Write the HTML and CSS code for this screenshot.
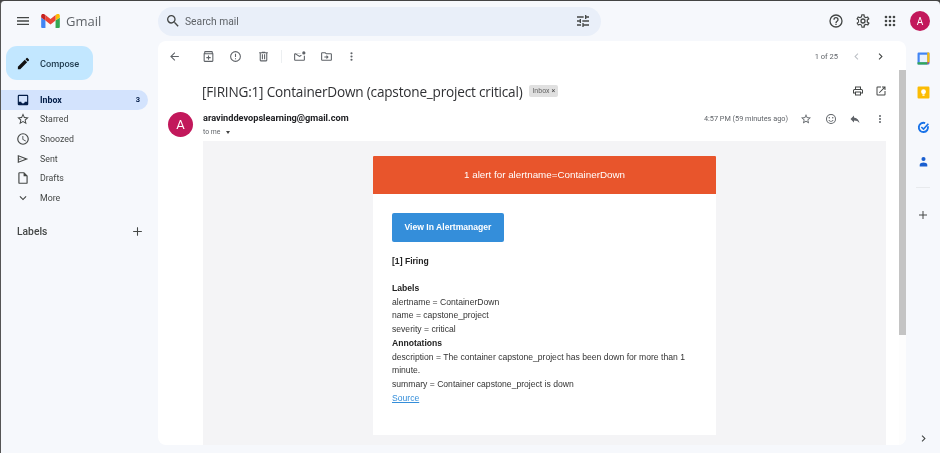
FILE: index.html
```html
<!DOCTYPE html>
<html lang="en">
<head>
<meta charset="utf-8">
<title>Gmail</title>
<link rel="stylesheet" href="styles.css">
</head>
<body>
<div class="app">
  <header class="topbar">
    <div class="brand">
      <svg class="ic menu" viewBox="0 0 24 24"><path d="M3 18h18v-2H3zm0-5h18v-2H3zm0-7v2h18V6z"/></svg>
      <svg class="logo" viewBox="0 0 24 18"><path fill="#4285f4" d="M1.6 18H5.500V8.500L0 4.400V16.400C0 17.300.7 18 1.600 18z"/><path fill="#34a853" d="M18.500 18h3.900c.9 0 1.600-.7 1.600-1.600V4.400l-5.500 4.100z"/><path fill="#fbbc04" d="M18.500 1.400v7.100L24 4.400V2.200C24 .2 21.700-1 20.100.2z"/><path fill="#ea4335" d="M5.500 8.500V1.400L12 6.300l6.500-4.900v7.100L12 13.400z"/><path fill="#c5221f" d="M0 2.200v2.200l5.500 4.100V1.400L3.900.2C2.300-1 0 .2 0 2.200z"/></svg>
      <span class="wordmark">Gmail</span>
    </div>
    <div class="search">
      <svg class="ic search-ic" viewBox="0 0 24 24"><path d="M15.500 14h-.79l-.28-.27A6.471 6.471 0 0 0 16 9.500 6.500 6.500 0 1 0 9.500 16c1.610 0 3.090-.59 4.230-1.570l.27.28v.79l5 4.990L20.490 19l-4.990-5zm-6 0C7.010 14 5 11.990 5 9.500S7.010 5 9.500 5 14 7.010 14 9.500 11.990 14 9.500 14z"/></svg>
      <span class="search-text">Search mail</span>
      <svg class="ic tune" viewBox="0 0 24 24"><path d="M3 17v2h6v-2zM3 5v2h10V5zm10 16v-2h8v-2h-8v-2h-2v6zM7 9v2H3v2h4v2h2V9zm14 4v-2H11v2zm-6-4h2V7h4V5h-4V3h-2z"/></svg>
    </div>
    <div class="top-actions">
      <svg class="ic" viewBox="0 0 24 24"><path d="M11 18h2v-2h-2zm1-16a10 10 0 1 0 0 20 10 10 0 0 0 0-20zm0 18a8 8 0 1 1 0-16 8 8 0 0 1 0 16zm0-14a4 4 0 0 0-4 4h2a2 2 0 1 1 4 0c0 2-3 1.750-3 5h2c0-2.250 3-2.500 3-5a4 4 0 0 0-4-4z"/></svg>
      <svg class="ic" viewBox="0 0 24 24"><path d="M19.400 13a7.500 7.500 0 0 0 0-2l2.100-1.600a.5.5 0 0 0 .1-.6l-2-3.500a.5.5 0 0 0-.6-.2l-2.500 1a7.300 7.300 0 0 0-1.700-1l-.4-2.700a.5.5 0 0 0-.5-.4h-4a.5.5 0 0 0-.5.4l-.4 2.700a7.700 7.700 0 0 0-1.700 1l-2.500-1a.5.5 0 0 0-.6.2l-2 3.500a.5.5 0 0 0 .1.6L4.600 11a7.500 7.500 0 0 0 0 2l-2.100 1.600a.5.5 0 0 0-.1.6l2 3.500c.1.2.4.3.6.2l2.500-1c.5.4 1.100.7 1.700 1l.4 2.700c0 .2.3.4.5.4h4c.2 0 .5-.2.5-.4l.4-2.700c.6-.3 1.200-.6 1.700-1l2.500 1c.2.1.5 0 .6-.2l2-3.500a.5.5 0 0 0-.1-.6zM17.500 11.200a5.400 5.400 0 0 1 0 1.600l-.1.9 1.900 1.500-1 1.700-2.200-.9-.8.6a5.600 5.600 0 0 1-1.300.8l-.9.4-.3 2.300h-2l-.3-2.300-.9-.4a5.500 5.500 0 0 1-1.300-.8l-.8-.6-2.200.9-1-1.700 1.900-1.500-.1-.9a5.400 5.400 0 0 1 0-1.600l.1-.9-1.900-1.500 1-1.700 2.200.9.8-.6a5.600 5.600 0 0 1 1.300-.8l.9-.4.3-2.300h2l.3 2.300.9.4c.5.2.9.5 1.300.8l.8.6 2.200-.9 1 1.700-1.900 1.500zM12 8a4 4 0 1 0 0 8 4 4 0 0 0 0-8zm0 6a2 2 0 1 1 0-4 2 2 0 0 1 0 4z"/></svg>
      <svg class="ic" viewBox="0 0 24 24"><path d="M6 8a2 2 0 1 0 0-4 2 2 0 0 0 0 4zm6 12a2 2 0 1 0 0-4 2 2 0 0 0 0 4zm-6 0a2 2 0 1 0 0-4 2 2 0 0 0 0 4zm0-6a2 2 0 1 0 0-4 2 2 0 0 0 0 4zm6 0a2 2 0 1 0 0-4 2 2 0 0 0 0 4zm4-8a2 2 0 1 0 4 0 2 2 0 0 0-4 0zm-4 2a2 2 0 1 0 0-4 2 2 0 0 0 0 4zm6 6a2 2 0 1 0 0-4 2 2 0 0 0 0 4zm0 6a2 2 0 1 0 0-4 2 2 0 0 0 0 4z"/></svg>
      <span class="avatar small">A</span>
    </div>
  </header>

  <div class="body">
    <nav class="sidebar">
      <div class="compose">
        <svg class="ic pencil" viewBox="0 0 24 24"><path d="M3 17.250V21h3.750L17.800 9.940l-3.750-3.750zM20.700 7.040a1 1 0 0 0 0-1.410l-2.340-2.340a1 1 0 0 0-1.410 0l-1.830 1.830 3.750 3.750z"/></svg>
        <span>Compose</span>
      </div>
      <ul class="nav">
        <li class="nav-item active"><svg class="ic" viewBox="0 0 24 24"><path d="M19 3H5a2 2 0 0 0-2 2v14a2 2 0 0 0 2 2h14a2 2 0 0 0 2-2V5a2 2 0 0 0-2-2zm0 12h-4a3 3 0 0 1-6 0H5V5h14z"/></svg><span class="label">Inbox</span><span class="count">3</span></li>
        <li class="nav-item"><svg class="ic" viewBox="0 0 24 24"><path d="M22 9.240l-7.190-.62L12 2 9.190 8.630 2 9.240l5.460 4.730L5.820 21 12 17.270 18.180 21l-1.630-7.030zM12 15.400l-3.760 2.270 1-4.280-3.320-2.880 4.380-.38L12 6.100l1.710 4.040 4.380.38-3.320 2.880 1 4.280z"/></svg><span class="label">Starred</span></li>
        <li class="nav-item"><svg class="ic" viewBox="0 0 24 24"><path d="M12 2a10 10 0 1 0 0 20 10 10 0 0 0 0-20zm0 18a8 8 0 1 1 0-16 8 8 0 0 1 0 16zm.5-13H11v6l5.250 3.150.75-1.230-4.500-2.670z"/></svg><span class="label">Snoozed</span></li>
        <li class="nav-item"><svg class="ic" viewBox="0 0 24 24"><path d="M3 5v14l18-7zm2 2.900L15.500 12 5 16.100v-3.100l6-1-6-1z"/></svg><span class="label">Sent</span></li>
        <li class="nav-item"><svg class="ic" viewBox="0 0 24 24"><path d="M14 2H6a2 2 0 0 0-2 2v16a2 2 0 0 0 2 2h12a2 2 0 0 0 2-2V8zm4 18H6V4h7v5h5z"/></svg><span class="label">Drafts</span></li>
        <li class="nav-item"><svg class="ic" viewBox="0 0 24 24"><path d="M16.600 8.600 12 13.200 7.400 8.600 6 10l6 6 6-6z"/></svg><span class="label">More</span></li>
      </ul>
      <div class="labels"><span>Labels</span><svg class="ic" viewBox="0 0 24 24"><path d="M20 13h-7v7h-2v-7H4v-2h7V4h2v7h7z"/></svg></div>
    </nav>

    <main class="panel">
      <div class="toolbar">
        <div class="tools">
          <svg class="ic back" viewBox="0 0 24 24"><path d="M20 11H7.800l5.600-5.600L12 4l-8 8 8 8 1.400-1.400L7.800 13H20z"/></svg>
          <svg class="ic" viewBox="0 0 24 24"><path d="M20 6V4a2 2 0 0 0-2-2H6a2 2 0 0 0-2 2v2H3v14a2 2 0 0 0 2 2h14a2 2 0 0 0 2-2V6zM6 4h12v2H6zm13 16H5V8h14zm-8-2h2v-3h3v-2h-3v-3h-2v3H8v2h3z"/></svg>
          <svg class="ic" viewBox="0 0 24 24"><path d="M12 2a10 10 0 1 0 0 20 10 10 0 0 0 0-20zm0 18a8 8 0 1 1 0-16 8 8 0 0 1 0 16zm-1-5h2v2h-2zm0-8h2v6h-2z"/></svg>
          <svg class="ic" viewBox="0 0 24 24"><path d="M15 4V3H9v1H4v2h1v13a2 2 0 0 0 2 2h10a2 2 0 0 0 2-2V6h1V4zm2 15H7V6h10zM9 8h2v9H9zm4 0h2v9h-2z"/></svg>
          <span class="sep"></span>
          <svg class="ic" viewBox="0 0 24 24"><path d="M20 8.500a3 3 0 1 0 0-6 3 3 0 0 0 0 6zM14.500 6H4a2 2 0 0 0-2 2v10a2 2 0 0 0 2 2h16a2 2 0 0 0 2-2v-7.500h-2V18H4V8l8 5 4-2.500-1-1.700-3 1.900-6.800-4.200h7.800z"/></svg>
          <svg class="ic" viewBox="0 0 24 24"><path d="M20 6h-8l-2-2H4a2 2 0 0 0-2 2v12a2 2 0 0 0 2 2h16a2 2 0 0 0 2-2V8a2 2 0 0 0-2-2zm0 12H4V6h5.200l2 2H20zm-8-1 4-4-4-4v3H8v2h4z"/></svg>
          <svg class="ic dots" viewBox="0 0 24 24"><path d="M12 8a2 2 0 1 0 0-4 2 2 0 0 0 0 4zm0 2a2 2 0 1 0 0 4 2 2 0 0 0 0-4zm0 6a2 2 0 1 0 0 4 2 2 0 0 0 0-4z"/></svg>
        </div>
        <div class="pager">
          <span>1 of 25</span>
          <svg class="ic faint" viewBox="0 0 24 24"><path d="M15.400 7.400 14 6l-6 6 6 6 1.400-1.400L10.800 12z"/></svg>
          <svg class="ic" viewBox="0 0 24 24"><path d="M10 6 8.600 7.400 13.200 12l-4.600 4.600L10 18l6-6z"/></svg>
        </div>
      </div>

      <div class="scroller">
        <div class="content">
          <div class="subject-row">
            <h1>[FIRING:1] ContainerDown (capstone_project critical)</h1>
            <span class="tag">Inbox <b>×</b></span>
            <div class="subject-actions">
              <svg class="ic" viewBox="0 0 24 24"><path d="M19 8h-1V3H6v5H5a3 3 0 0 0-3 3v6h4v4h12v-4h4v-6a3 3 0 0 0-3-3zM8 5h8v3H8zm8 14H8v-4h8zm4-4h-2v-2H6v2H4v-4a1 1 0 0 1 1-1h14a1 1 0 0 1 1 1z"/></svg>
              <svg class="ic" viewBox="0 0 24 24"><path d="M19 19H5V5h7V3H5a2 2 0 0 0-2 2v14a2 2 0 0 0 2 2h14a2 2 0 0 0 2-2v-7h-2zM14 3v2h3.600l-9.800 9.800 1.400 1.400L19 6.400V10h2V3z"/></svg>
            </div>
          </div>
          <div class="message">
            <span class="avatar">A</span>
            <div class="message-main">
              <div class="meta">
                <div class="sender">
                  <div class="from">aravinddevopslearning@gmail.com</div>
                  <div class="to">to me <i class="caret"></i></div>
                </div>
                <div class="meta-right">
                  <span class="time">4:57 PM (59 minutes ago)</span>
                  <svg class="ic" viewBox="0 0 24 24"><path d="M22 9.240l-7.190-.62L12 2 9.190 8.630 2 9.240l5.460 4.730L5.820 21 12 17.270 18.180 21l-1.630-7.030zM12 15.400l-3.760 2.270 1-4.280-3.320-2.880 4.380-.38L12 6.100l1.710 4.040 4.380.38-3.320 2.880 1 4.280z"/></svg>
                  <svg class="ic" viewBox="0 0 24 24"><path d="M12 2a10 10 0 1 0 0 20 10 10 0 0 0 0-20zm0 18a8 8 0 1 1 0-16 8 8 0 0 1 0 16zM8.500 11a1.500 1.500 0 1 0 0-3 1.500 1.500 0 0 0 0 3zm7 0a1.500 1.500 0 1 0 0-3 1.500 1.500 0 0 0 0 3zM12 17.500c2.300 0 4.300-1.500 5.100-3.500h-1.800c-.7 1.200-1.900 2-3.300 2s-2.600-.8-3.300-2H6.900c.8 2 2.800 3.500 5.100 3.500z"/></svg>
                  <svg class="ic" viewBox="0 0 24 24"><path d="M10 9V5l-7 7 7 7v-4.100c5 0 8.500 1.600 11 5.100-1-5-4-10-11-11z"/></svg>
                  <svg class="ic" viewBox="0 0 24 24"><path d="M12 8a2 2 0 1 0 0-4 2 2 0 0 0 0 4zm0 2a2 2 0 1 0 0 4 2 2 0 0 0 0-4zm0 6a2 2 0 1 0 0 4 2 2 0 0 0 0-4z"/></svg>
                </div>
              </div>
              <div class="mail-bg">
                <div class="mail-card">
                  <div class="alert-head">1 alert for alertname=ContainerDown</div>
                  <div class="alert-body">
                    <span class="btn">View In Alertmanager</span>
                    <p class="firing"><b>[1] Firing</b></p>
                    <p class="details"><b>Labels</b><br>alertname = ContainerDown<br>name = capstone_project<br>severity = critical<br><b>Annotations</b><br>description = The container capstone_project has been down for more than 1 minute.<br>summary = Container capstone_project is down<br><a href="#">Source</a></p>
                  </div>
                </div>
              </div>
            </div>
          </div>
        </div>
        <div class="scrollbar"><div class="thumb"></div></div>
      </div>
    </main>

    <aside class="rail">
      <svg class="app-ic" viewBox="0 0 24 24"><rect x="1" y="1" width="22" height="22" rx="2" fill="#4285f4"/><rect x="5" y="5" width="14" height="14" fill="#e8f0fe"/><path fill="#fbbc04" d="M19 1h3a1 1 0 0 1 1 1v17h-4z"/><path fill="#34a853" d="M1 19h18v4H2a1 1 0 0 1-1-1z"/><path fill="#ea4335" d="M19 19h4l-4 4z"/></svg>
      <svg class="app-ic" viewBox="0 0 24 24"><rect x="1" y="1" width="22" height="22" rx="2" fill="#fbbc04"/><circle cx="12" cy="10.500" r="4.500" fill="#fff"/><rect x="10" y="15.500" width="4" height="2.500" fill="#fff"/></svg>
      <svg class="app-ic" viewBox="0 0 24 24"><path fill="none" stroke="#1a73e8" stroke-width="3.500" d="M20 9.500A8.500 8.500 0 1 1 15 4"/><path fill="none" stroke="#1a73e8" stroke-width="3" d="M8 11l4 4 9-10"/></svg>
      <svg class="app-ic" viewBox="0 0 24 24"><circle cx="12" cy="7.500" r="3.800" fill="#1a5fd0"/><path fill="#1a5fd0" d="M5 21v-3c0-2.800 4-4.200 7-4.200s7 1.400 7 4.200v3z"/></svg>
      <span class="rail-sep"></span>
      <svg class="ic plus" viewBox="0 0 24 24"><path d="M20 13h-7v7h-2v-7H4v-2h7V4h2v7h7z"/></svg>
      <svg class="ic collapse" viewBox="0 0 24 24"><path d="M10 6 8.600 7.400 13.200 12l-4.600 4.600L10 18l6-6z"/></svg>
    </aside>
  </div>
</div>
</body>
</html>
```

FILE: styles.css
```css
* { box-sizing: border-box; }
html, body { margin: 0; height: 100%; overflow: hidden; }
body { background: #444; font-family: Roboto, "Liberation Sans", sans-serif; color: #202124; }
.app { height: 452px; width: 940px; margin-top: 1px; background: #f6f8fc; border-left: 1px solid #555; border-radius: 4px 4px 0 0; display: flex; flex-direction: column; overflow: hidden; filter: blur(.4px); }
.ic { width: 16px; height: 16px; fill: #444746; flex: none; display: block; }

.topbar { height: 40px; flex: none; display: flex; align-items: center; }
.brand { width: 157px; flex: none; display: flex; align-items: center; padding-left: 14px; }
.menu { width: 16px; height: 16px; }
.logo { width: 19px; height: 14px; margin-left: 10px; }
.wordmark { margin-left: 6px; font-size: 13px; color: #5f6368; font-family: "Open Sans", sans-serif; }
.search { width: 443px; height: 29px; background: #e9eff9; border-radius: 15px; display: flex; align-items: center; padding: 0 10px 0 7px; }
.search-text { margin-left: 4px; font-size: 10.300px; color: #5f6368; flex: 1; }
.top-actions { margin-left: auto; display: flex; align-items: center; gap: 11px; padding-right: 10px; }
.top-actions .ic { width: 16px; height: 16px; }

.avatar { width: 25px; height: 25px; border-radius: 50%; background: #c2185b; color: #fff; display: flex; align-items: center; justify-content: center; font-size: 13px; flex: none; }
.avatar.small { width: 20px; height: 20px; font-size: 10px; margin-left: 1px; }

.body { flex: 1; display: flex; min-height: 0; }
.sidebar { width: 157px; flex: none; padding-top: 5px; }
.compose { width: 87px; height: 34px; margin-left: 5px; background: #c2e7ff; border-radius: 11px; display: flex; align-items: center; gap: 9px; padding-left: 10px; font-size: 9.200px; color: #1f3a4d; font-weight: 500; }
.compose .pencil { fill: #111; width: 15px; height: 15px; }
.nav { list-style: none; margin: 10px 0 0; padding: 0; }
.nav-item { height: 19.600px; width: 147px; display: flex; align-items: center; padding: 0 8px 0 15px; font-size: 8.800px; color: #444746; border-radius: 0 10px 10px 0; }
.nav-item .ic { width: 14px; height: 14px; }
.nav-item .label { margin-left: 10px; flex: 1; }
.nav-item.active { background: #d3e3fd; color: #041e49; font-weight: 700; }
.nav-item.active .ic { fill: #041e49; }
.count { font-size: 7.500px; font-weight: 700; }
.labels { margin: 17px 0 0 16px; width: 127px; display: flex; justify-content: space-between; align-items: center; font-size: 10.300px; color: #444746; font-weight: 500; }
.labels .ic { width: 13px; height: 13px; }

.panel { width: 748px; height: 404px; flex: none; background: #fff; border-radius: 8px; display: flex; flex-direction: column; overflow: hidden; }
.toolbar { height: 29px; flex: none; display: flex; align-items: center; justify-content: space-between; padding: 1px 19px 0 10px; }
.tools { display: flex; align-items: center; gap: 14.500px; }
.tools .ic { width: 13px; height: 13px; fill: #5f6368; }
.tools .back { margin-right: 6px; }
.tools .dots { margin-left: -3px; }
.sep { width: 1px; height: 13px; background: #eceff1; margin: 0 -3.500px; }
.pager { display: flex; align-items: center; font-size: 7.500px; color: #5f6368; }
.pager .ic { width: 13px; height: 13px; margin-left: 11px; }
.pager .faint { fill: #bdc1c6; margin-left: 12px; }

.scroller { flex: 1; display: flex; min-height: 0; }
.content { flex: 1; min-width: 0; }
.scrollbar { width: 7px; flex: none; background: #fdfdfd; }
.thumb { height: 265px; background: #c4c4c4; }

.subject-row { height: 42px; display: flex; align-items: center; padding: 0 12px 0 44px; }
h1 { margin: 0; font-size: 13.600px; font-weight: 400; color: #303134; white-space: nowrap; font-family: "Open Sans", Roboto, sans-serif; letter-spacing: -0.200px; }
.tag { margin-left: 7px; height: 12px; padding: 0 3px; background: #e0e0e0; border-radius: 2px; font-size: 7px; color: #666; display: flex; align-items: center; gap: 2px; }
.tag b { color: #444; font-weight: 400; }
.subject-actions { margin-left: auto; display: flex; gap: 11px; }
.subject-actions .ic { width: 12px; height: 12px; }

.message { display: flex; padding: 0 13px 0 10px; }
.message-main { flex: 1; min-width: 0; margin-left: 10px; }
.meta { height: 29px; display: flex; justify-content: space-between; }
.from { font-size: 9.200px; font-weight: 700; color: #202124; }
.to { font-size: 6.800px; color: #5f6368; margin-top: 5px; display: flex; align-items: center; gap: 4px; }
.caret { width: 0; height: 0; border: 2.500px solid transparent; border-top: 3px solid #444; border-bottom: 0; margin-left: 2px; }
.meta-right { display: flex; align-items: flex-start; gap: 12.700px; }
.meta-right .ic { width: 12px; height: 12px; margin-top: 1px; fill: #5f6368; }
.time { font-size: 7.300px; color: #5f6368; margin-top: 2px; margin-right: -.7px; }

.mail-bg { background: #f4f4f6; height: 305px; padding: 14.500px 0 0 170px; }
.mail-card { width: 343px; height: 279px; background: #fff; }
.alert-head { height: 38.500px; background: #e8552c; color: #fff; font: 9.800px/38.500px "Liberation Sans", Arial, sans-serif; text-align: center; border-radius: 1px 1px 0 0; }
.alert-body { padding: 19px 19px 0; font: 8.600px/13.750px "Liberation Sans", Arial, sans-serif; color: #333; }
.btn { display: block; width: 112px; height: 29px; background: #348eda; color: #fff; font-weight: 700; line-height: 29px; text-align: center; border-radius: 2px; }
.firing { margin: 13px 0 0; color: #222; }
.details { margin: 13px 0 0; }
.details b { color: #222; }
.details a { color: #348eda; }

.rail { flex: 1; display: flex; flex-direction: column; align-items: center; padding-top: 10.500px; }
.app-ic { width: 13px; height: 13px; display: block; margin-bottom: 21.500px; flex: none; }
.rail-sep { width: 14px; height: 1px; background: #e8eaed; margin: -3px 0 21px; }
.plus { width: 12px; height: 12px; }
.collapse { margin-top: auto; margin-bottom: 8px; width: 13px; height: 13px; }
```
